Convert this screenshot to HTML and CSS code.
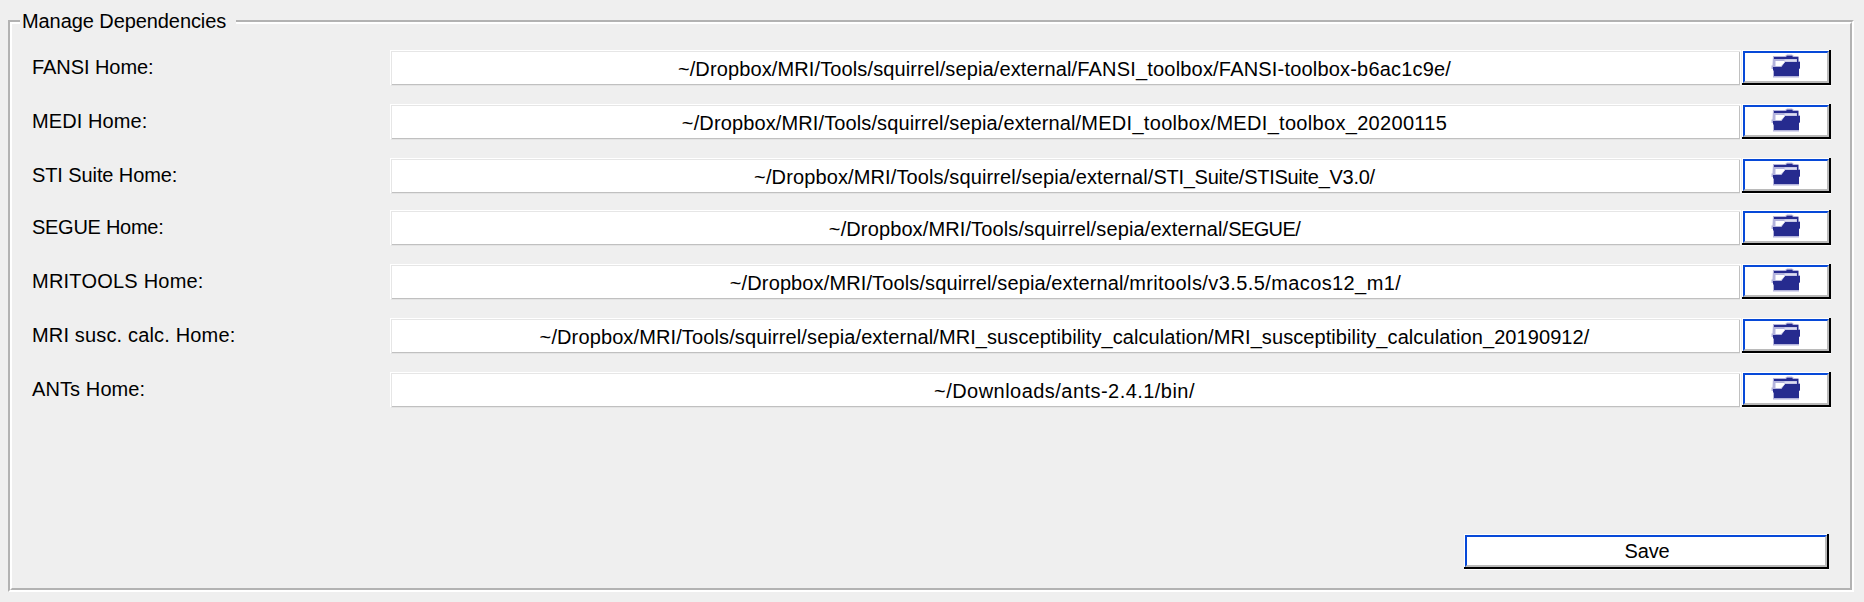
FILE: index.html
```html
<!DOCTYPE html>
<html lang="en">
<head>
<meta charset="utf-8">
<title>Manage Dependencies</title>
<link rel="stylesheet" href="styles.css">
</head>
<body>
<svg width="0" height="0" class="defs">
  <symbol id="folder" viewBox="0 0 32 26">
    <path fill="#b4b4dc" d="M3 3H15L17 1.5H22L24 3H28.5V8H30V16H29V24.5H3V16H1.5V12.5H2.5Z"/>
    <path fill="#262b8f" d="M4 4H16L17 2.7H22L23 4H28.4V9H30V15.5H29V23H4V17.5H3V14H11.5L15 9H27V6H4Z"/>
    <path fill="#fff" d="M5.5 8H14.5V9.5L11 13H5.5Z"/>
    <path fill="#dcdcf0" d="M14.5 6.5H26.5V8.5H14.5Z"/>
  </symbol>
</svg>
<main class="panel">
  <h1 class="legend">Manage Dependencies</h1>
  <div class="content">
    <div class="rows">
      <div class="row">
        <label class="label fansi">FANSI Home:</label>
        <div class="field"><span class="path">~/Dropbox/MRI/Tools/squirrel/sepia/external/<span class="fansi-dir">FANSI_toolbox/FANSI-toolbox-b6ac1c9e/</span></span></div>
        <div class="button"><div class="face"><svg class="icon"><use href="#folder"/></svg></div></div>
      </div>
      <div class="row">
        <label class="label medi">MEDI Home:</label>
        <div class="field"><span class="path">~/Dropbox/MRI/Tools/squirrel/sepia/external/<span class="medi-dir">MEDI_toolbox/MEDI_toolbox_20200115</span></span></div>
        <div class="button"><div class="face"><svg class="icon"><use href="#folder"/></svg></div></div>
      </div>
      <div class="row">
        <label class="label sti">STI Suite Home:</label>
        <div class="field"><span class="path">~/Dropbox/MRI/Tools/squirrel/sepia/external/<span class="sti-dir">STI_Suite/STISuite_V3.0/</span></span></div>
        <div class="button"><div class="face"><svg class="icon"><use href="#folder"/></svg></div></div>
      </div>
      <div class="row tight">
        <label class="label segue">SEGUE Home:</label>
        <div class="field"><span class="path">~/Dropbox/MRI/Tools/squirrel/sepia/external/<span class="segue-dir">SEGUE/</span></span></div>
        <div class="button"><div class="face"><svg class="icon"><use href="#folder"/></svg></div></div>
      </div>
      <div class="row">
        <label class="label mritools">MRITOOLS Home:</label>
        <div class="field shift"><span class="path">~/Dropbox/MRI/Tools/squirrel/sepia/external/<span class="mritools-dir">mritools/v3.5.5/macos12_m1/</span></span></div>
        <div class="button"><div class="face"><svg class="icon"><use href="#folder"/></svg></div></div>
      </div>
      <div class="row">
        <label class="label susc">MRI susc. calc. Home:</label>
        <div class="field"><span class="path">~/Dropbox/MRI/Tools/squirrel/sepia/external/<span class="susc-dir">MRI_susceptibility_calculation/MRI_susceptibility_calculation_20190912/</span></span></div>
        <div class="button"><div class="face"><svg class="icon"><use href="#folder"/></svg></div></div>
      </div>
      <div class="row">
        <label class="label ants">ANTs Home:</label>
        <div class="field"><span class="path ants-dir">~/Downloads/ants-2.4.1/bin/</span></div>
        <div class="button"><div class="face"><svg class="icon"><use href="#folder"/></svg></div></div>
      </div>
    </div>
    <div class="button save"><div class="face">Save</div></div>
  </div>
</main>
</body>
</html>
```
FILE: styles.css
```css
* { box-sizing: border-box; }

body {
  margin: 0;
  height: 602px;
  padding: 20px 10px 10px 8px;
  background: #efefef;
  color: #000;
  font: 20px/24px "Liberation Sans", Arial, sans-serif;
  overflow: hidden;
}

.defs { position: absolute; }

/* Etched group box: two offset 2px frames */
.panel {
  position: relative;
  height: 572px;
  border: 2px solid;
  border-color: #b2b2b2 #fff #fff #b2b2b2;
}

.content {
  height: 100%;
  display: flex;
  flex-direction: column;
  justify-content: space-between;
  align-items: flex-end;
  border: 2px solid;
  border-color: #fff #b2b2b2 #b2b2b2 #fff;
  padding: 26px 19px 19px 20px;
}

.legend {
  position: absolute;
  left: 10px;
  top: -13px;
  width: 216px;
  margin: 0;
  padding-left: 2px;
  background: #efefef;
  font-size: 20px;
  font-weight: 400;
  letter-spacing: -0.08px;
}

.rows {
  width: 100%;
  display: flex;
  flex-direction: column;
  gap: 18px;
}

.row {
  display: flex;
  height: 36px;
}

.tight { margin-top: -2px; }

.label {
  width: 358px;
  padding-top: 5px;
  white-space: nowrap;
}

.field {
  width: 1351px;
  margin-right: 1px;
  border: 1px solid #fff;
  border-bottom-color: #e4e4e4;
  background: #fff;
  box-shadow: inset 1px 1px #e6e6e6, inset -1px -1px #c0c0c0;
  text-align: center;
  padding: 6px 2px 0 0;
  white-space: nowrap;
}

.field.shift { padding-right: 0; }

.path { letter-spacing: 0.12px; }

.button {
  width: 89px;
  height: 35px;
  padding: 1px 0 0 1px;
  border: solid #000;
  border-width: 0 2px 2px 0;
  background: #fff;
  box-shadow: 0 1px #fff;
}

.face {
  height: 32px;
  display: flex;
  justify-content: center;
  border: 2px solid;
  border-color: #0749d8 #bababa #bababa #0749d8;
  background: #fff;
}

.icon {
  width: 32px;
  height: 26px;
}

.row .button { flex: none; }

.save { width: 365px; margin-right: 2px; }

.save .face { padding: 2px 0 0 2px; letter-spacing: -0.2px; }

/* Tracking per caption */
.fansi { letter-spacing: -0.06px; }
.medi { letter-spacing: 0.1px; }
.sti { letter-spacing: -0.1px; }
.segue { letter-spacing: -0.28px; }
.mritools { letter-spacing: 0.22px; }
.susc { letter-spacing: 0.16px; }
.ants { letter-spacing: 0.1px; }
.fansi-dir { letter-spacing: 0.19px; }
.medi-dir { letter-spacing: 0.31px; }
.sti-dir { letter-spacing: -0.27px; }
.segue-dir { letter-spacing: -0.6px; }
.mritools-dir { letter-spacing: 0.4px; }
.susc-dir { letter-spacing: 0.08px; }
.ants-dir { letter-spacing: 0.46px; }
```
